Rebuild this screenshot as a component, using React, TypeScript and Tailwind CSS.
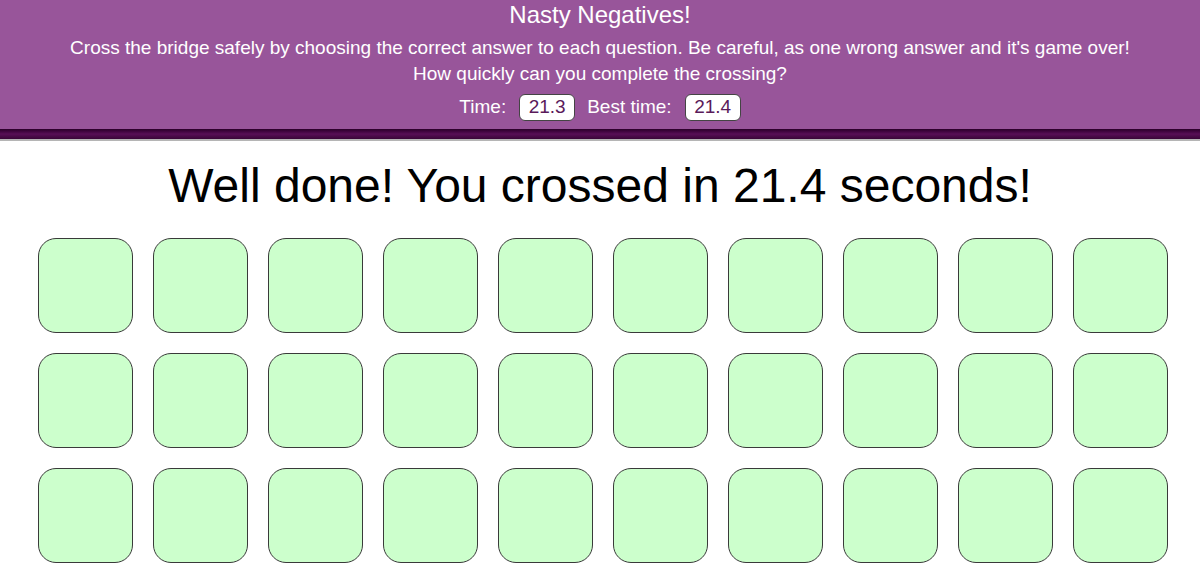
const rows = [0, 1, 2];
const cols = [0, 1, 2, 3, 4, 5, 6, 7, 8, 9];

function TimeBox({ value }: { value: string }) {
  return (
    <span className="inline-flex h-[27px] w-[56px] items-center justify-center rounded-[6px] border-[1.5px] border-[#444] bg-white text-[#5a1a5a]">
      {value}
    </span>
  );
}

export default function App() {
  return (
    <div className="min-h-screen bg-white font-['Liberation_Sans',Arial,sans-serif]">
      <header className="bg-[#98559a] text-center text-white">
        <div className="text-[24px] leading-[30px]">Nasty Negatives!</div>
        <p className="mt-[5px] text-[19px] leading-[26px]">
          Cross the bridge safely by choosing the correct answer to each question. Be careful, as one wrong answer and it's game over!
          <br />
          How quickly can you complete the crossing?
        </p>
        <div className="mt-[6px] flex items-center justify-center pb-[7px] text-[19px]">
          <span className="mr-[13px]">Time:</span>
          <TimeBox value="21.3" />
          <span className="mr-[13px] ml-[12px]">Best time:</span>
          <TimeBox value="21.4" />
        </div>
      </header>
      <div className="h-[10px] bg-gradient-to-b from-[#2a0029] via-[#580f56] to-[#3a0638]" />
      <div className="h-[2px] bg-[#b5b5b5]" />

      <h1 className="mt-[17px] text-center text-[48px] leading-[56px] text-black">
        Well done! You crossed in 21.4 seconds!
      </h1>

      <div className="mt-[24px] flex flex-col gap-[20px] pl-[38px]">
        {rows.map((r) => (
          <div key={r} className="flex gap-[20px]">
            {cols.map((c) => (
              <div
                key={c}
                className="h-[95px] w-[95px] rounded-[18px] border border-[#3a3a3a] bg-[#ccffcc]"
              />
            ))}
          </div>
        ))}
      </div>
    </div>
  );
}
